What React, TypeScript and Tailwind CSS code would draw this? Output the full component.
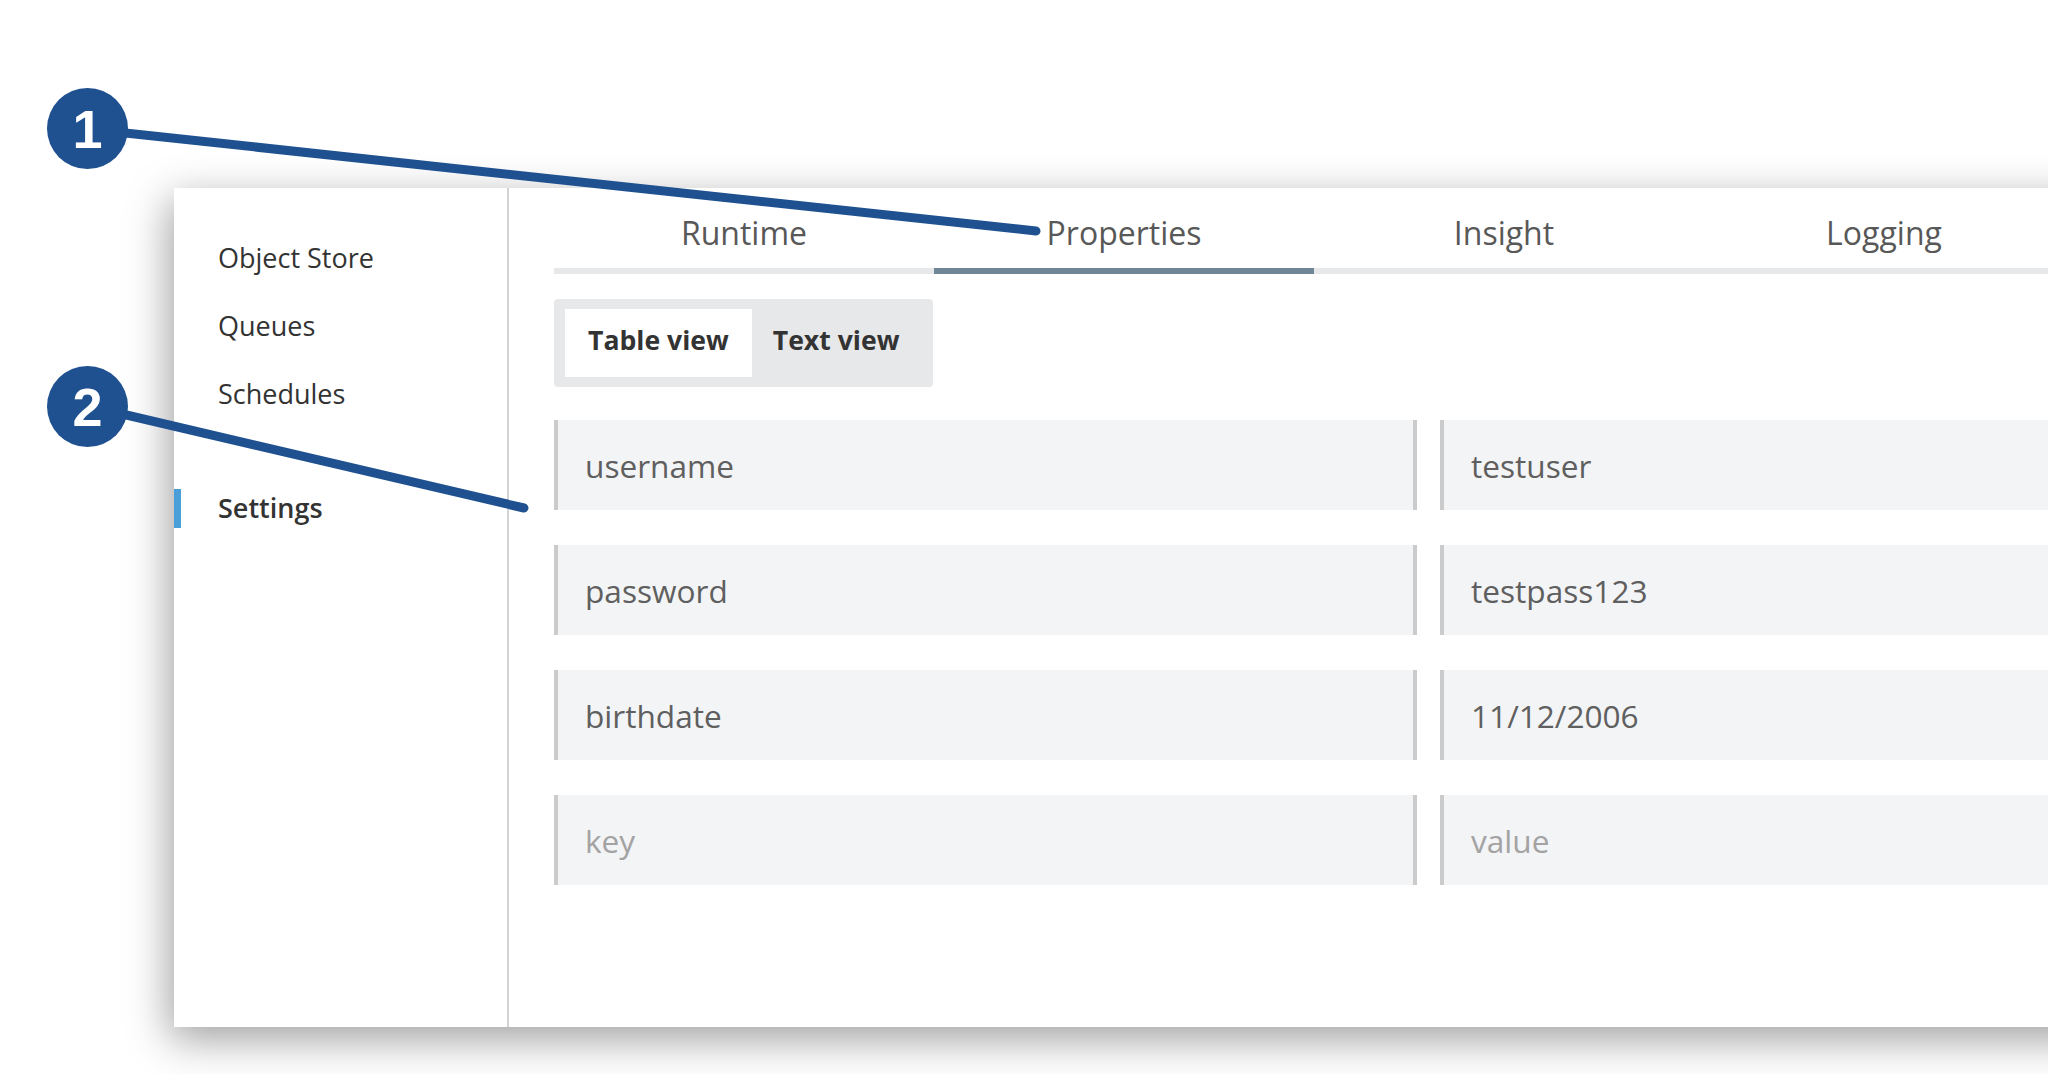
import React from 'react';

const sideItems = ['Object Store', 'Queues', 'Schedules'];
const tabs = ['Runtime', 'Properties', 'Insight', 'Logging'];

const rows = [
  { key: 'username', value: 'testuser' },
  { key: 'password', value: 'testpass123' },
  { key: 'birthdate', value: '11/12/2006' },
  { key: '', value: '' },
];

const Callout: React.FC<{ n: string; className: string }> = ({ n, className }) => (
  <div
    className={`absolute w-[81px] h-[81px] rounded-full bg-[#1f5190] flex items-center justify-center text-white text-[54px] font-bold font-['Liberation_Sans',Arial,sans-serif] leading-none ${className}`}
  >
    {n}
  </div>
);

const App: React.FC = () => {
  return (
    <div className="relative w-[2048px] h-[1074px] overflow-hidden bg-white font-['Open_Sans',sans-serif]">
      <div className="ml-[174px] mt-[188px] w-[1950px] h-[839px] bg-white flex shadow-[-4px_12px_40px_rgba(0,0,0,0.38)]">
        {/* sidebar */}
        <div className="w-[335px] shrink-0 border-r-2 border-[#d3d3d3] pt-[36px]">
          {sideItems.map((s) => (
            <div key={s} className="h-[68px] flex items-center">
              <span className="w-[7px] h-[39px]" />
              <span className="ml-[37px] text-[27px] text-[#333]">{s}</span>
            </div>
          ))}
          <div className="h-[68px] mt-[46px] flex items-center">
            <span className="w-[7px] h-[39px] bg-[#4a9fd8]" />
            <span className="ml-[37px] text-[27px] font-semibold text-[#333]">Settings</span>
          </div>
        </div>

        {/* main */}
        <div className="flex-1 pl-[45px]">
          <div className="flex">
            {tabs.map((t) => (
              <div
                key={t}
                className={`w-[380px] shrink-0 pt-[23px] pb-[13px] text-center text-[32px] leading-[44px] text-[#585858] border-b-[6px] ${
                  t === 'Properties' ? 'border-[#6f8696]' : 'border-[#e7e8ea]'
                }`}
              >
                {t}
              </div>
            ))}
          </div>

          <div className="mt-[25px] inline-flex bg-[#e7e8ea] rounded-[4px] py-[10px] pl-[11px] pr-[12px]">
            <div className="h-[68px] px-[23px] pb-[4px] bg-white flex items-center text-[26.6px] font-bold text-[#333]">
              Table view
            </div>
            <div className="h-[68px] pl-[21px] pr-[22px] pb-[4px] flex items-center text-[26.6px] font-bold text-[#333]">
              Text view
            </div>
          </div>

          <div className="mt-[33px] flex flex-col gap-[35px]">
            {rows.map((r, i) => (
              <div key={i} className="flex gap-[23px]">
                <div className="w-[863px] h-[90px] shrink-0 bg-[#f3f4f6] border-l-4 border-r-4 border-[#cbcbcb] pl-[27px] pt-[2px] flex items-center text-[31.6px]">
                  {r.key ? (
                    <span className="text-[#5f5f5f]">{r.key}</span>
                  ) : (
                    <span className="text-[#a3a3a3]">key</span>
                  )}
                </div>
                <div className="w-[863px] h-[90px] shrink-0 bg-[#f3f4f6] border-l-4 border-[#cbcbcb] pl-[27px] pt-[2px] flex items-center text-[31.6px]">
                  {r.value ? (
                    <span className="text-[#5f5f5f]">{r.value}</span>
                  ) : (
                    <span className="text-[#a3a3a3]">value</span>
                  )}
                </div>
              </div>
            ))}
          </div>
        </div>
      </div>

      {/* annotation lines */}
      <svg className="absolute inset-0 pointer-events-none" width="2048" height="1074">
        <line x1="88" y1="129" x2="1036" y2="231" stroke="#1f5190" strokeWidth="9" strokeLinecap="round" />
        <line x1="88" y1="406" x2="524" y2="508" stroke="#1f5190" strokeWidth="9" strokeLinecap="round" />
      </svg>
      <Callout n="1" className="left-[47px] top-[88px]" />
      <Callout n="2" className="left-[47px] top-[366px]" />
    </div>
  );
};

export default App;
